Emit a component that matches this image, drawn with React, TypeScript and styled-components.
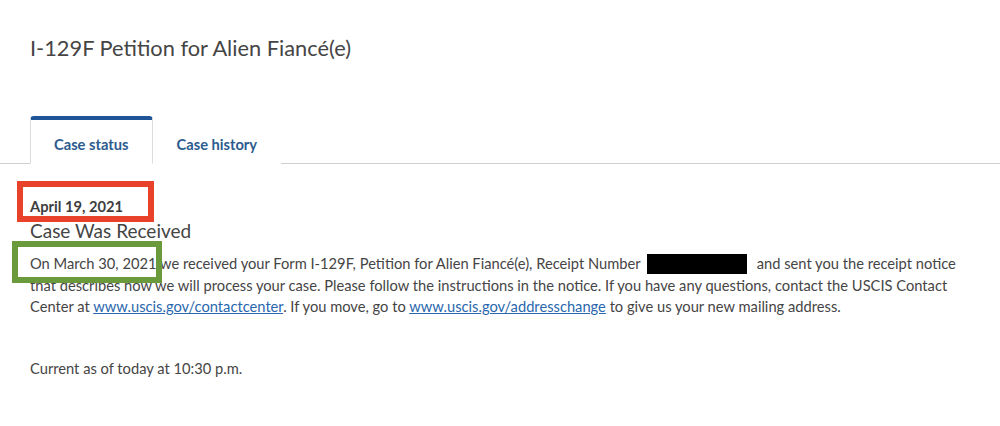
import styled, { createGlobalStyle } from "styled-components";

const GlobalStyle = createGlobalStyle`
    body {
        margin: 0;
        background: #ffffff;
        font-family: "Source Sans Pro", Lato, "Noto Sans", sans-serif;
        color: #454545;
    }
`;

const Page = styled.main`
    width: 1000px;
    height: 426px;
    overflow: hidden;
    padding-top: 33px;
    box-sizing: border-box;
`;

const Title = styled.h1`
    margin: 0;
    padding: 0 30px;
    font-size: 21.8px;
    line-height: 29px;
    font-weight: 400;
    color: #454545;
`;

const TabBar = styled.nav`
    display: flex;
    margin-top: 54px;
    padding-left: 30px;
    border-bottom: 1px solid #cfcfcf;
`;

const Tab = styled.div<{ $active?: boolean }>`
    display: flex;
    align-items: center;
    justify-content: center;
    box-sizing: border-box;
    height: 48px;
    padding: 4px 23px 0;
    margin-bottom: -1px;
    font-size: 14.7px;
    font-weight: 700;
    color: #2c5b8e;
    background: #ffffff;
    border-radius: 4px 4px 0 0;
    border: 1px solid ${(p) => (p.$active ? "#dcdcdc" : "transparent")};
    border-top: 4px solid ${(p) => (p.$active ? "#1f5597" : "transparent")};
    border-bottom: 1px solid ${(p) => (p.$active ? "#ffffff" : "transparent")};
`;

const Content = styled.section`
    padding: 0 30px;
`;

const Marked = styled.span<{ $color: string; $left: number; $right: number; $top: number; $h: number }>`
    position: relative;

    &::after {
        content: "";
        position: absolute;
        left: ${(p) => p.$left}px;
        right: ${(p) => p.$right}px;
        top: ${(p) => p.$top}px;
        height: ${(p) => p.$h}px;
        box-sizing: border-box;
        border: 6px solid ${(p) => p.$color};
        pointer-events: none;
    }
`;

const DateLine = styled.div`
    margin-top: 32px;
    font-size: 14.7px;
    line-height: 20px;
    font-weight: 700;
    color: #3d3d3d;
`;

const Status = styled.h2`
    margin: 3px 0 0;
    font-size: 19px;
    line-height: 24px;
    font-weight: 400;
    color: #454545;
`;

const Para = styled.p`
    margin: 10px 0 0;
    font-size: 14.7px;
    line-height: 21.5px;
    white-space: nowrap;
`;

const Redacted = styled.span`
    display: inline-block;
    width: 100px;
    height: 20px;
    margin: 0 10px 0 6px;
    vertical-align: -5px;
    background: #000000;
`;

const Link = styled.a`
    color: #2a67ad;
    text-decoration: underline;
`;

const Updated = styled.p`
    margin: 40px 0 0;
    font-size: 14.7px;
    line-height: 21px;
`;

export default function App() {
    return (
        <>
            <GlobalStyle />
            <Page>
                <Title>I-129F Petition for Alien Fiancé(e)</Title>
                <TabBar>
                    <Tab $active>Case status</Tab>
                    <Tab>Case history</Tab>
                </TabBar>
                <Content>
                    <DateLine>
                        <Marked $color="#e8432a" $left={-13} $right={-31} $top={-16} $h={41}>
                            April 19, 2021
                        </Marked>
                    </DateLine>
                    <Status>Case Was Received</Status>
                    <Para>
                        <Marked $color="#6b9a3c" $left={-18} $right={-5} $top={-13} $h={42}>
                            On March 30, 2021
                        </Marked>{" "}
                        we received your Form I-129F, Petition for Alien Fiancé(e), Receipt Number
                        <Redacted />
                        and sent you the receipt notice
                        <br />
                        that describes how we will process your case. Please follow the instructions in the notice. If you have any questions, contact the USCIS Contact
                        <br />
                        Center at <Link href="#">www.uscis.gov/contactcenter</Link>. If you move, go to{" "}
                        <Link href="#">www.uscis.gov/addresschange</Link> to give us your new mailing address.
                    </Para>
                    <Updated>Current as of today at 10:30 p.m.</Updated>
                </Content>
            </Page>
        </>
    );
}
